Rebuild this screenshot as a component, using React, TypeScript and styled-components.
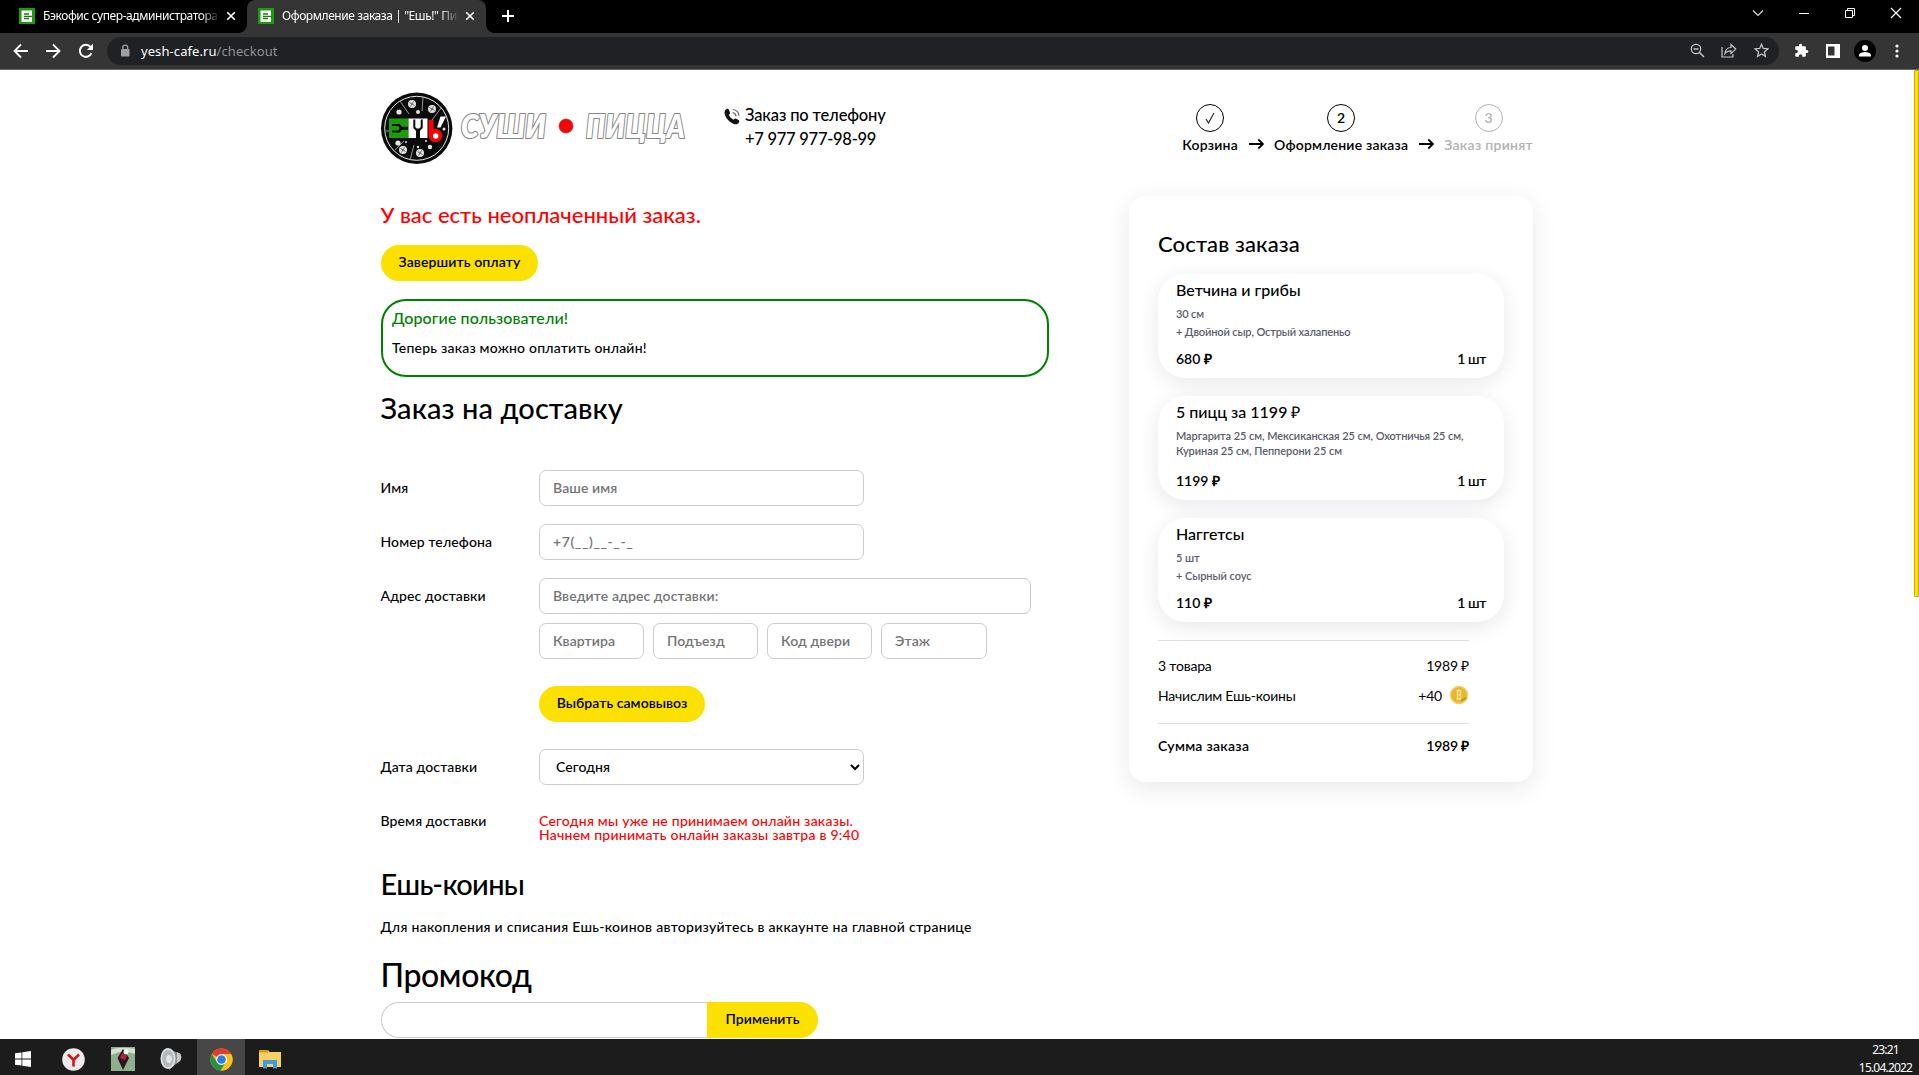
import React from 'react';
import styled, { createGlobalStyle, css } from 'styled-components';

const GlobalStyle = createGlobalStyle`
  * { box-sizing: border-box; }
  html, body { margin: 0; padding: 0; background: #fff; overflow: hidden; }
  body, input, select, button { font-family: Lato, "Open Sans", sans-serif; font-weight: 500; }
`;

const ui = '"Noto Sans", "Open Sans", sans-serif';

/* ---------- window ---------- */

const Desktop = styled.div`
  display: flex;
  flex-direction: column;
  width: 1919px;
  height: 1075px;
  overflow: hidden;
  background: #fff;
  color: #000;
`;

const TabStrip = styled.div`
  display: flex;
  height: 33px;
  background: #000;
  color: #fff;
  padding-left: 8px;
  flex: none;
`;

const Tab = styled.div<{ $active?: boolean }>`
  position: relative;
  display: flex;
  align-items: center;
  width: 239px;
  height: 33px;
  padding: 0 10px 1px 11px;
  background: ${(p) => (p.$active ? '#353535' : 'transparent')};
  border-radius: 8px 8px 0 0;
  ${(p) =>
    p.$active &&
    css`
      &::before, &::after {
        content: '';
        position: absolute;
        bottom: 0;
        width: 8px;
        height: 8px;
      }
      &::before { left: -8px; background: radial-gradient(circle at 0 0, transparent 7.5px, #353535 8px); }
      &::after { right: -8px; background: radial-gradient(circle at 100% 0, transparent 7.5px, #353535 8px); }
    `}
`;

const TabTitle = styled.span`
  width: 177px;
  margin-left: 8px;
  overflow: hidden;
  white-space: nowrap;
  font: 400 12px/18px ${ui};
  letter-spacing: -0.42px;
  mask-image: linear-gradient(90deg, #000 158px, transparent 177px);
`;

const TabClose = styled.svg`
  width: 10px;
  height: 10px;
  margin-left: 6px;
`;

const NewTab = styled.svg`
  width: 14px;
  height: 14px;
  margin: 9px 0 0 15px;
`;

const WindowButtons = styled.div`
  display: flex;
  margin-left: auto;
`;

const WindowButton = styled.span`
  display: flex;
  justify-content: center;
  width: 46px;
  padding-top: 7px;
`;

const Toolbar = styled.div`
  display: flex;
  align-items: center;
  height: 37px;
  flex: none;
  padding: 0 6px 1px 10px;
  background: #353535;
  border-bottom: 1px solid #666;
`;

const ToolIcon = styled.span<{ $w?: number }>`
  display: flex;
  align-items: center;
  justify-content: center;
  width: ${(p) => p.$w ?? 32}px;
  height: 28px;
  flex: none;
`;

const Omnibox = styled.div`
  display: flex;
  align-items: center;
  flex: 1;
  height: 28px;
  margin: 0 6px 0 10px;
  padding: 0 2px 0 12px;
  border-radius: 14px;
  background: #202124;
`;

const Url = styled.span`
  flex: 1;
  margin-left: 10px;
  font: 400 13px/20px ${ui};
  letter-spacing: 0.08px;
  color: #fff;
`;

const UrlPath = styled.span`
  color: #8e9196;
`;

/* ---------- page ---------- */

const Viewport = styled.div`
  display: flex;
  flex: 1;
  min-height: 0;
  overflow: hidden;
`;

const Page = styled.div`
  flex: 1;
`;

const ScrollThumb = styled.div`
  width: 5px;
  height: 527px;
  border: 1px solid #c3ae0a;
  border-radius: 1px;
  background: #fbe000;
`;

const Header = styled.header`
  display: flex;
  align-items: flex-start;
  height: 126px;
  padding-left: 376px;
`;

const Logo = styled.svg`
  width: 320px;
  height: 80px;
  margin-top: 18px;
  overflow: visible;
`;

const WordMark = styled.g`
  font: italic 800 32px Lato, sans-serif;
  fill: #fff;
  stroke: #858585;
  stroke-width: 2.2px;
  stroke-linejoin: round;
  paint-order: stroke;
`;

const Phone = styled.div`
  display: grid;
  grid-template-columns: 21px auto;
  margin: 34px 0 0 28px;
  font-size: 16.5px;
  line-height: 23.5px;
`;

const PhoneIcon = styled.svg`
  width: 17px;
  height: 17px;
  margin-top: 4px;
`;

const PhoneText = styled.span<{ $track: number }>`
  grid-column: 2;
  letter-spacing: ${(p) => p.$track}px;
  white-space: nowrap;
`;

const Steps = styled.div`
  display: flex;
  align-items: flex-end;
  margin: 34px 0 0 auto;
  padding-right: 381px;
`;

const Step = styled.div<{ $muted?: boolean; $track: number }>`
  display: flex;
  flex-direction: column;
  align-items: center;
  font-size: 14px;
  line-height: 18px;
  font-weight: 600;
  letter-spacing: ${(p) => p.$track}px;
  color: ${(p) => (p.$muted ? '#b2b2b2' : '#000')};
`;

const StepCircle = styled.span`
  display: flex;
  align-items: center;
  justify-content: center;
  width: 28px;
  height: 28px;
  margin-bottom: 4px;
  border: 1px solid currentColor;
  border-radius: 50%;
`;

const StepArrow = styled.svg`
  width: 15px;
  height: 12px;
  margin: 0 10.5px 4px;
`;

const Columns = styled.div`
  display: flex;
  align-items: flex-start;
  padding: 0 381px 0 381px;
  justify-content: space-between;
`;

const Checkout = styled.main`
  width: 668px;
`;

const Unpaid = styled.p`
  margin: 5px 0 16px -0.5px;
  font-size: 22px;
  line-height: 28px;
  color: #f00;
`;

const YellowButton = styled.button<{ $w: number; $joined?: boolean; $track: number }>`
  display: block;
  width: ${(p) => p.$w}px;
  height: 36px;
  padding: 0 0 2.5px;
  border: 0;
  border-radius: ${(p) => (p.$joined ? '0 18px 18px 0' : '18px')};
  background: #fbe000;
  color: #000;
  font-size: 14px;
  font-weight: 600;
  letter-spacing: ${(p) => p.$track}px;
`;

const Notice = styled.section`
  height: 78px;
  margin-top: 18px;
  padding: 7px 9px;
  border: 2px solid #008000;
  border-radius: 25px;
`;

const NoticeTitle = styled.div`
  font-size: 16px;
  line-height: 20px;
  letter-spacing: 0.1px;
  color: #008000;
`;

const NoticeText = styled.div`
  margin-top: 10px;
  font-size: 14px;
  line-height: 20px;
  letter-spacing: 0.21px;
`;

const Heading = styled.h2<{ $top: number; $size?: number; $track?: number }>`
  margin: ${(p) => p.$top}px 0 0 -0.5px;
  font-size: ${(p) => p.$size ?? 29}px;
  line-height: ${(p) => (p.$size ? 38 : 34)}px;
  font-weight: 500;
  letter-spacing: ${(p) => p.$track ?? 0}px;
`;

const Form = styled.div`
  margin-top: 45px;
`;

const FormRow = styled.div<{ $top?: number; $text?: boolean }>`
  display: grid;
  grid-template-columns: 158px auto;
  margin-top: ${(p) => p.$top ?? 0}px;
  line-height: ${(p) => (p.$text ? 14 : 36)}px;
  font-size: 14px;
`;

const Label = styled.label`
  margin-left: -0.5px;
  letter-spacing: 0.12px;
`;

const Fields = styled.div`
  grid-column: 2;
  display: flex;
  gap: 9px;
`;

const fieldBox = css`
  height: 36px;
  border: 1px solid #cbcccf;
  border-radius: 7px;
  background: #fff;
  font-size: 14px;
  outline: none;
`;

const Input = styled.input<{ $w: number; $track?: number }>`
  ${fieldBox}
  width: ${(p) => p.$w}px;
  padding: 0 13px 2px;
  font-weight: 600;
  letter-spacing: ${(p) => p.$track ?? 0.1}px;
  &::placeholder { color: #757575; opacity: 1; }
`;

const Select = styled.select`
  ${fieldBox}
  width: 325px;
  padding: 0 0 2px 12px;
  color: #000;
  letter-spacing: 0.1px;
`;

const Closed = styled.div`
  color: #f00;
  letter-spacing: 0.24px;
`;

const CoinsHint = styled.p`
  margin: 16px 0 0 -0.5px;
  font-size: 14px;
  line-height: 20px;
  letter-spacing: 0.29px;
  white-space: nowrap;
`;

const Promo = styled.div`
  display: flex;
  margin-top: 8px;
`;

const PromoInput = styled.input`
  width: 326px;
  height: 36px;
  border: 1px solid #cbcccf;
  border-right: 0;
  border-radius: 18px 0 0 18px;
`;

/* ---------- order summary ---------- */

const Summary = styled.aside`
  width: 404px;
  height: 586px;
  padding: 34px 29px 0;
  border-radius: 16px;
  background: #fff;
  box-shadow: 0 6px 24px rgba(40, 44, 70, 0.1);
`;

const SummaryTitle = styled.h3`
  margin: 0 0 16px;
  font-size: 22px;
  line-height: 28px;
  font-weight: 500;
  letter-spacing: 0.13px;
`;

const Item = styled.article`
  display: flex;
  flex-direction: column;
  height: 104px;
  margin-bottom: 18px;
  padding: 6px 18px 9.5px;
  border-radius: 27px;
  background: #fff;
  box-shadow: 0 5px 20px rgba(40, 44, 70, 0.11);
`;

const ItemName = styled.div`
  font-size: 16px;
  line-height: 20px;
`;

const ItemNote = styled.div<{ $top?: number; $track: number }>`
  margin-top: ${(p) => p.$top ?? 0}px;
  font-size: 11px;
  line-height: 15px;
  font-weight: 600;
  letter-spacing: ${(p) => p.$track}px;
  color: #5b5d6e;
  white-space: nowrap;
`;

const ItemFoot = styled.div`
  display: flex;
  justify-content: space-between;
  margin-top: auto;
  font-size: 14px;
  line-height: 20px;
  font-weight: 600;
`;

const Qty = styled.span`
  letter-spacing: -0.4px;
`;

const Totals = styled.div`
  width: 311px;
`;

const TotalGroup = styled.div<{ $pad: string }>`
  border-top: 1px solid #dedede;
  padding: ${(p) => p.$pad};
`;

const TotalRow = styled.div<{ $strong?: boolean }>`
  display: flex;
  align-items: center;
  justify-content: space-between;
  height: 30px;
  font-size: 14px;
  font-weight: ${(p) => (p.$strong ? 600 : 400)};
  letter-spacing: ${(p) => (p.$strong ? 0.27 : -0.2)}px;
`;

const TotalPrice = styled.span`
  letter-spacing: -0.2px;
`;

const CoinAmount = styled.span`
  display: flex;
  align-items: center;
  gap: 7px;
`;

/* ---------- taskbar ---------- */

const Taskbar = styled.footer`
  display: flex;
  align-items: stretch;
  height: 36px;
  flex: none;
  background: #1c1c1c;
`;

const TaskButton = styled.span<{ $w: number; $active?: boolean }>`
  display: flex;
  align-items: center;
  justify-content: center;
  width: ${(p) => p.$w}px;
  padding-top: 4px;
  background: ${(p) => (p.$active ? '#474747' : 'transparent')};
`;

const Clock = styled.div`
  display: flex;
  flex-direction: column;
  align-items: center;
  width: 67px;
  margin-left: auto;
  padding-top: 2px;
  color: #fff;
  font: 400 12px/18px ${ui};
  letter-spacing: -0.8px;
`;

/* ---------- drawings ---------- */

const Favicon = () => (
  <svg width="16" height="16" viewBox="0 0 16 16">
    <rect width="16" height="16" fill="#1a9c0b" />
    <rect x="2.5" y="2.5" width="10.5" height="11.5" fill="#fff" />
    <path d="M5 6h5M5 10.5h5M5 8.3h8" fill="none" stroke="#157a0a" strokeWidth="1.3" />
  </svg>
);

const CloseX = () => (
  <TabClose viewBox="0 0 10 10">
    <path d="M1.2 1.2l7.6 7.6M8.8 1.2L1.2 8.8" stroke="#fff" strokeWidth="1.6" />
  </TabClose>
);

const toppings = [
  [36, 16, 4], [56, 21, 4], [27, 62, 4], [44, 65, 4],
  [23, 24, 2.6], [22, 55, 2.6], [54, 59, 2.2], [42, 24, 2], [68, 41, 1.5], [42, 59, 1.2], [30, 54, 1], [50, 53, 1],
];

const LogoArt = () => (
  <Logo viewBox="0 0 320 80">
    <circle cx="40.7" cy="40.3" r="35.7" fill="#0a0a0a" />
    <circle cx="40.7" cy="40.3" r="32" fill="none" stroke="#e8e8e8" strokeWidth="1" />
    <path d="M24 13l9 13M47 9l-1 14M65 20l-9 12M10 43h5M34 72l4-15M19 62l9-9" stroke="#bbb" strokeWidth=".8" />
    {toppings.map(([x, y, r]) => (
      <g key={`${x}-${y}`}>
        <circle cx={x} cy={y} r={r} fill="#e4e4e4" />
        {r > 3 && <path d={`M${x - 2.5} ${y - 1.5}l5 3M${x + 1.5} ${y - 2.5}l-3 5`} stroke="#444" strokeWidth=".8" />}
      </g>
    ))}
    <rect x="13" y="30.5" width="19.5" height="19.5" fill="#1a9c0b" />
    <path d="M16 36h7.500l2.500 2.800h6.500v3H26L23.500 44.500H16v-2h6.500l1-2.200-1-2.300H16z" fill="#0a0a0a" />
    <rect x="32.5" y="30.500" width="19" height="19.500" fill="#fff" />
    <path d="M37.300 31.500h2v7.500l1.400 1.500h2.600l1.400-1.500v-7.500h2v8.500l-2.700 2.800h-4L37.300 40z" fill="#0a0a0a" />
    <path d="M40 42h4v8h-4z" fill="#0a0a0a" />
    <path d="M52.5 32h5v15h-5z" fill="#f00" />
    <circle cx="59.5" cy="47.5" r="6.8" fill="#f00" />
    <circle cx="59.7" cy="48" r="2.7" fill="#fff" />
    <path d="M64.5 28.5h5.5l-5.500 11h-3.500z" fill="#fff" />
    <WordMark>
      <text x="85" y="50" textLength="85" lengthAdjust="spacingAndGlyphs">СУШИ</text>
      <text x="210" y="50" textLength="99" lengthAdjust="spacingAndGlyphs">ПИЦЦА</text>
    </WordMark>
    <circle cx="190" cy="38" r="7" fill="#f00" stroke="#933" strokeWidth=".7" />
  </Logo>
);

const Arrow = () => (
  <StepArrow viewBox="0 0 15 12">
    <path d="M0 6h14M9.300 1.500L14 6l-4.700 4.500" fill="none" stroke="#000" strokeWidth="1.8" />
  </StepArrow>
);

const Coin = () => (
  <svg width="20" height="20" viewBox="0 0 20 20">
    <circle cx="10" cy="10" r="9.3" fill="#efcf7a" />
    <circle cx="10" cy="10" r="7.8" fill="#e9b824" />
    <path d="M7.5 5.5h4.5M8 9.7h3.5M7.5 14h4.5M8.5 5.5v8.5M11.5 5.5v8.5" stroke="#f6e3a4" strokeWidth="1.3" />
    <path d="M12 16l5-3" stroke="#c98d10" strokeWidth="1.5" />
  </svg>
);

const Chrome = () => (
  <svg width="23" height="23" viewBox="0 0 24 24">
    <circle cx="12" cy="12" r="11.5" fill="#fbc116" />
    <path d="M12 12L2 6.2A11.5 11.5 0 0 1 22 6.3H12z" fill="#e33b2e" />
    <path d="M2 6.2A11.5 11.5 0 0 0 11 23.45L16.7 14.5 12 12 7.2 14.8z" fill="#229342" />
    <path d="M22 6.3H12l4.9 8.5L11.5 23.5A11.5 11.5 0 0 0 22 6.3z" fill="#fbc116" />
    <circle cx="12" cy="12" r="5.7" fill="#fff" />
    <circle cx="12" cy="12" r="4.5" fill="#2b7de9" />
  </svg>
);

/* ---------- data ---------- */

const items = [
  { name: 'Ветчина и грибы', notes: ['30 см', '+ Двойной сыр, Острый халапеньо'], noteTrack: -0.13, gap: 3, price: '680 ₽' },
  {
    name: '5 пицц за 1199 ₽',
    notes: ['Маргарита 25 см, Мексиканская 25 см, Охотничья 25 см,', 'Куриная 25 см, Пепперони 25 см'],
    noteTrack: -0.06,
    gap: 0,
    price: '1199 ₽',
  },
  { name: 'Наггетсы', notes: ['5 шт', '+ Сырный соус'], noteTrack: -0.06, gap: 3, price: '110 ₽' },
];

export default function App() {
  return (
    <Desktop>
      <GlobalStyle />
      <TabStrip>
        <Tab>
          <Favicon />
          <TabTitle>Бэкофис супер-администратора</TabTitle>
          <CloseX />
        </Tab>
        <Tab $active>
          <Favicon />
          <TabTitle>Оформление заказа | "Ешь!" Пицца</TabTitle>
          <CloseX />
        </Tab>
        <NewTab viewBox="0 0 14 14">
          <path d="M7 1v12M1 7h12" stroke="#fff" strokeWidth="2" />
        </NewTab>
        <WindowButtons>
          <WindowButton>
            <svg width="12" height="12" viewBox="0 0 12 12"><path d="M1 3.5l5 5 5-5" fill="none" stroke="#ddd" strokeWidth="1.2" /></svg>
          </WindowButton>
          <WindowButton>
            <svg width="12" height="12" viewBox="0 0 12 12"><path d="M1 6.5h10" stroke="#fff" /></svg>
          </WindowButton>
          <WindowButton>
            <svg width="12" height="12" viewBox="0 0 12 12">
              <path d="M1.5 3.5h7v7h-7zM3.5 3.5v-2h7v7h-2" fill="none" stroke="#fff" />
            </svg>
          </WindowButton>
          <WindowButton>
            <svg width="12" height="12" viewBox="0 0 12 12"><path d="M1 1l10 10M11 1L1 11" stroke="#fff" strokeWidth="1.2" /></svg>
          </WindowButton>
        </WindowButtons>
      </TabStrip>

      <Toolbar>
        <ToolIcon $w={22}>
          <svg width="16" height="16" viewBox="0 0 16 16"><path d="M15 8H2M8 1.5L1.5 8 8 14.5" fill="none" stroke="#fff" strokeWidth="1.8" /></svg>
        </ToolIcon>
        <ToolIcon $w={42}>
          <svg width="16" height="16" viewBox="0 0 16 16"><path d="M1 8h13M8 1.5L14.5 8 8 14.5" fill="none" stroke="#fff" strokeWidth="1.8" /></svg>
        </ToolIcon>
        <ToolIcon $w={23}>
          <svg width="16" height="16" viewBox="0 0 16 16">
            <path d="M13.5 10A6 6 0 1 1 12.5 4" fill="none" stroke="#fff" strokeWidth="2" />
            <path d="M15 .8V7H8.8z" fill="#fff" />
          </svg>
        </ToolIcon>
        <Omnibox>
          <svg width="12" height="14" viewBox="0 0 12 14">
            <rect x="2" y="5" width="8.5" height="7.5" rx="1" fill="#9aa0a6" />
            <path d="M3.8 5.5V3.5a2.45 2.45 0 0 1 4.9 0v2" fill="none" stroke="#9aa0a6" strokeWidth="1.3" />
          </svg>
          <Url>yesh-cafe.ru<UrlPath>/checkout</UrlPath></Url>
          <ToolIcon>
            <svg width="15" height="15" viewBox="0 0 15 15">
              <path d="M9.5 9.5l4.5 4.5M3.5 6h5" stroke="#c4c4c4" strokeWidth="1.5" />
              <circle cx="6" cy="6" r="4.7" fill="none" stroke="#c4c4c4" strokeWidth="1.3" />
            </svg>
          </ToolIcon>
          <ToolIcon>
            <svg width="16" height="15" viewBox="0 0 16 15">
              <path d="M1 4v10h11v-3" fill="none" stroke="#c4c4c4" strokeWidth="1.2" />
              <path d="M4 10.5c.5-4 3-6 6-6V1.5l4.8 4.6L10 10.5V7.8C7.5 7.8 5.5 8.5 4 10.5z" fill="none" stroke="#c4c4c4" strokeWidth="1.2" />
            </svg>
          </ToolIcon>
          <ToolIcon>
            <svg width="15" height="15" viewBox="0 0 15 15">
              <path d="M7.5 1.3l1.8 4.2 4.5.4-3.4 3 1 4.400-3.900-2.300-3.900 2.300 1-4.400-3.400-3 4.500-.4z" fill="none" stroke="#c4c4c4" strokeWidth="1.3" />
            </svg>
          </ToolIcon>
        </Omnibox>
        <ToolIcon>
          <svg width="15" height="15" viewBox="0 0 24 24">
            <path fill="#fff" d="M20.5 11H19V7c0-1.1-.9-2-2-2h-4V3.5a2.5 2.5 0 0 0-5 0V5H4c-1.1 0-2 .9-2 2v3.8h1.5a2.7 2.7 0 0 1 0 5.4H2V20c0 1.1.9 2 2 2h3.800v-1.500a2.700 2.700 0 0 1 5.400 0V22H17c1.100 0 2-.9 2-2v-4h1.500a2.500 2.500 0 0 0 0-5z" />
          </svg>
        </ToolIcon>
        <ToolIcon>
          <svg width="14" height="14" viewBox="0 0 14 14"><path fill="#fff" fillRule="evenodd" d="M0 0h14v14H0zM2 2.5v9h6.5v-9z" /></svg>
        </ToolIcon>
        <ToolIcon>
          <svg width="22" height="22" viewBox="0 0 22 22">
            <circle cx="11" cy="11" r="11" fill="#000" />
            <circle cx="11" cy="8" r="3" fill="#fff" />
            <path d="M5 16.5V15c0-2 4-3 6-3s6 1 6 3v1.5z" fill="#fff" />
          </svg>
        </ToolIcon>
        <ToolIcon>
          <svg width="4" height="14" viewBox="0 0 4 14">
            <circle cx="2" cy="2" r="1.6" fill="#fff" />
            <circle cx="2" cy="7" r="1.6" fill="#fff" />
            <circle cx="2" cy="12" r="1.6" fill="#fff" />
          </svg>
        </ToolIcon>
      </Toolbar>

      <Viewport>
        <Page>
          <Header>
            <LogoArt />
            <Phone>
              <PhoneIcon viewBox="0 0 17 17">
                <path d="M2.2 1.2C3.5.2 4.5.8 5 2l1 2.5c.3.9-.1 1.500-1.200 2.300.7 2 2.700 4 4.900 5 .8-1 1.500-1.500 2.400-1l2.400 1.300c1 .6 1.100 1.500.2 2.600-1.300 1.800-3.300 2-5.500 1C4.500 13.500 1.500 9.500.6 5.500.3 3.500.8 2.200 2.200 1.200z" fill="#111" />
                <path d="M8.5 4.5c2 .2 3.3 1.5 3.6 3.6M8.7 1.5c3.5.3 6 2.7 6.300 6.300" fill="none" stroke="#666" strokeWidth="1.2" />
              </PhoneIcon>
              <PhoneText $track={-0.15}>Заказ по телефону</PhoneText>
              <PhoneText $track={-0.27}>+7 977 977-98-99</PhoneText>
            </Phone>
            <Steps>
              <Step $track={0.25}>
                <StepCircle>
                  <svg width="10" height="12" viewBox="0 0 10 12"><path d="M1 7l2.5 4L9 1" fill="none" stroke="#222" strokeWidth="1.1" /></svg>
                </StepCircle>
                Корзина
              </Step>
              <Arrow />
              <Step $track={0.19}>
                <StepCircle>2</StepCircle>
                Оформление заказа
              </Step>
              <Arrow />
              <Step $muted $track={0.29}>
                <StepCircle>3</StepCircle>
                Заказ принят
              </Step>
            </Steps>
          </Header>

          <Columns>
            <Checkout>
              <Unpaid>У вас есть неоплаченный заказ.</Unpaid>
              <YellowButton $w={157} $track={0.12}>Завершить оплату</YellowButton>
              <Notice>
                <NoticeTitle>Дорогие пользователи!</NoticeTitle>
                <NoticeText>Теперь заказ можно оплатить онлайн!</NoticeText>
              </Notice>
              <Heading $top={14} $track={0.08}>Заказ на доставку</Heading>

              <Form>
                <FormRow>
                  <Label>Имя</Label>
                  <Input $w={325} placeholder="Ваше имя" />
                </FormRow>
                <FormRow $top={18}>
                  <Label>Номер телефона</Label>
                  <Input $w={325} $track={0.6} placeholder="+7(__)__-_-_" />
                </FormRow>
                <FormRow $top={18}>
                  <Label>Адрес доставки</Label>
                  <Input $w={492} placeholder="Введите адрес доставки:" />
                </FormRow>
                <FormRow $top={9}>
                  <Fields>
                    <Input $w={105} placeholder="Квартира" />
                    <Input $w={105} placeholder="Подъезд" />
                    <Input $w={105} placeholder="Код двери" />
                    <Input $w={106} placeholder="Этаж" />
                  </Fields>
                </FormRow>
                <FormRow $top={27}>
                  <Fields>
                    <YellowButton $w={166} $track={0.06}>Выбрать самовывоз</YellowButton>
                  </Fields>
                </FormRow>
                <FormRow $top={27}>
                  <Label>Дата доставки</Label>
                  <Select defaultValue="today">
                    <option value="today">Сегодня</option>
                  </Select>
                </FormRow>
                <FormRow $top={29} $text>
                  <Label>Время доставки</Label>
                  <Closed>
                    Сегодня мы уже не принимаем онлайн заказы.
                    <br />
                    Начнем принимать онлайн заказы завтра в 9:40
                  </Closed>
                </FormRow>
              </Form>

              <Heading $top={25} $track={-0.7}>Ешь-коины</Heading>
              <CoinsHint>Для накопления и списания Ешь-коинов авторизуйтесь в аккаунте на главной странице</CoinsHint>
              <Heading $top={19} $size={32} $track={-0.4}>Промокод</Heading>
              <Promo>
                <PromoInput />
                <YellowButton $w={111} $joined $track={0.05}>Применить</YellowButton>
              </Promo>
            </Checkout>

            <Summary>
              <SummaryTitle>Состав заказа</SummaryTitle>
              {items.map((item) => (
                <Item key={item.name}>
                  <ItemName>{item.name}</ItemName>
                  <ItemNote $top={6} $track={item.noteTrack}>{item.notes[0]}</ItemNote>
                  <ItemNote $top={item.gap} $track={item.noteTrack}>{item.notes[1]}</ItemNote>
                  <ItemFoot>
                    <span>{item.price}</span>
                    <Qty>1 шт</Qty>
                  </ItemFoot>
                </Item>
              ))}
              <Totals>
                <TotalGroup $pad="9px 0 13px">
                  <TotalRow>
                    <span>3 товара</span>
                    <span>1989 ₽</span>
                  </TotalRow>
                  <TotalRow>
                    <span>Начислим Ешь-коины</span>
                    <CoinAmount>+40 <Coin /></CoinAmount>
                  </TotalRow>
                </TotalGroup>
                <TotalGroup $pad="6px 0 0">
                  <TotalRow $strong>
                    <span>Сумма заказа</span>
                    <TotalPrice>1989 ₽</TotalPrice>
                  </TotalRow>
                </TotalGroup>
              </Totals>
            </Summary>
          </Columns>
        </Page>
        <ScrollThumb />
      </Viewport>

      <Taskbar>
        <TaskButton $w={46}>
          <svg width="16" height="16" viewBox="0 0 16 16"><path d="M0 2.3l6.500-.9v6.200H0zM7.300 1.300L16 0v7.600H7.300zM0 8.400h6.500v6.200L0 13.700zM7.300 8.400H16V16l-8.700-1.300z" fill="#fff" /></svg>
        </TaskButton>
        <TaskButton $w={55}>
          <svg width="23" height="23" viewBox="0 0 23 23">
            <circle cx="11.5" cy="11.5" r="11.3" fill="#ececec" />
            <path d="M6 6.5l5.5 5.5L17 6.5M11.5 11.5v7" fill="none" stroke="#d8131b" strokeWidth="2.6" />
          </svg>
        </TaskButton>
        <TaskButton $w={43}>
          <svg width="24" height="24" viewBox="0 0 24 24">
            <rect width="24" height="24" fill="#8fb08c" />
            <path d="M0 3q8-4 24-1v5Q12 2 0 8z" fill="#d3e2cd" />
            <path d="M12 2l6 9-6 12L6.5 11z" fill="#2a1520" />
            <path d="M11 6l5 3-2 4-5-2z" fill="#c51d38" />
            <circle cx="15" cy="5" r="2.5" fill="#fff" />
          </svg>
        </TaskButton>
        <TaskButton $w={53}>
          <svg width="22" height="24" viewBox="0 0 22 24">
            <path d="M6 1l10 4 4 1.5 1.5 3.5-1.5 4-4 3-7 6z" fill="#8b9095" />
            <path d="M17 5l3.5 2 .8 3-.8 3.5-3.5 2.5z" fill="#c9cccf" />
            <ellipse cx="8" cy="11.5" rx="7.5" ry="10.5" fill="#dfe1e4" />
            <ellipse cx="8" cy="11.5" rx="5.8" ry="8.7" fill="#b4b9be" />
            <ellipse cx="9" cy="12" rx="2.8" ry="4" fill="#e3e5e7" />
          </svg>
        </TaskButton>
        <TaskButton $w={48} $active>
          <Chrome />
        </TaskButton>
        <TaskButton $w={50}>
          <svg width="22" height="19" viewBox="0 0 22 19">
            <path d="M0 0h9l1.5 2H22v15H0z" fill="#f8d064" />
            <path d="M0 0h9v2.5H0z" fill="#dd9a12" />
            <path d="M4 18.5V10h14v8.5h-4V14H8v4.5z" fill="#3d9be0" />
          </svg>
        </TaskButton>
        <Clock>
          <span>23:21</span>
          <span>15.04.2022</span>
        </Clock>
      </Taskbar>
    </Desktop>
  );
}
